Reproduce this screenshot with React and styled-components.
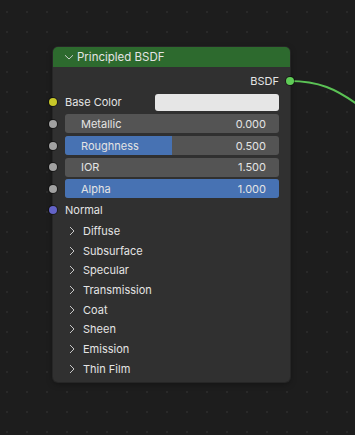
import React from "react";
import styled, { createGlobalStyle } from "styled-components";

const GlobalStyle = createGlobalStyle`
html, body {
margin: 0;
padding: 0;
background: #1d1d1d;
}
body {
font-family: Inter, "DejaVu Sans", sans-serif;
font-size: 11px;
color: #e4e4e4;
}
`;

const panels = ["Diffuse", "Subsurface", "Specular", "Transmission", "Coat", "Sheen", "Emission", "Thin Film"];

const fields = [
    { label: "Metallic", value: "0.000", fill: 0 },
    { label: "Roughness", value: "0.500", fill: 0.5 },
    { label: "IOR", value: "1.500", fill: 0 },
    { label: "Alpha", value: "1.000", fill: 1 },
];

const Chevron = ({ down }) => (
    <svg width="10" height="10" viewBox="0 0 10 10">
        {down
            ? <path d="M1 3.2 L5 7 L9 3.2" fill="none" stroke="#d8d8d8" strokeWidth="0.9" />
            : <path d="M3 1 L7 5 L3 9" fill="none" stroke="#d8d8d8" strokeWidth="0.9" />}
    </svg>
);

const App = () => {
    return (
        <Canvas>
            <GlobalStyle />
            <Link width="355" height="435" viewBox="0 0 355 435">
                <path d="M289 81 C 318 81, 336 88, 362 108" fill="none" stroke="#5bc255" strokeWidth="2" />
            </Link>
            <Node>
                <Header>
                    <Chevron down />
                    <span>Principled BSDF</span>
                </Header>
                <Body>
                    <OutputRow>
                        BSDF
                        <Socket side="right" color="#5fcc57" />
                    </OutputRow>
                    <Row>
                        <Socket color="#c7c729" />
                        <Label>Base Color</Label>
                        <Swatch />
                    </Row>
                    {fields.map((f) => (
                        <Row key={f.label}>
                            <Socket color="#a1a1a1" />
                            <Field>
                                <Fill style={{ width: `${f.fill * 100}%` }} />
                                <FieldText>{f.label}</FieldText>
                                <FieldText>{f.value}</FieldText>
                            </Field>
                        </Row>
                    ))}
                    <Row>
                        <Socket color="#6363c7" />
                        <Label>Normal</Label>
                    </Row>
                    {panels.map((p) => (
                        <PanelRow key={p}>
                            <Chevron />
                            <span>{p}</span>
                        </PanelRow>
                    ))}
                </Body>
            </Node>
        </Canvas>
    );
};

export default App;

const Canvas = styled.div`
position: relative;
width: 355px;
height: 435px;
overflow: hidden;
box-sizing: border-box;
padding: 47px 0 0 53px;
background-color: #1d1d1d;
background-image: radial-gradient(circle, #292929 0.8px, transparent 1.1px);
background-size: 20px 20px;
background-position: -3px 2px;
`;

const Link = styled.svg`
position: absolute;
left: 0;
top: 0;
`;

const Node = styled.div`
position: relative;
width: 237px;
border-radius: 5px;
background: #303030;
box-shadow: 0 0 0 1px #262626, 0 2px 6px rgba(0, 0, 0, 0.35);
`;

const Header = styled.div`
height: 20px;
display: flex;
align-items: center;
gap: 3px;
padding-left: 11px;
background: #2d6a2e;
border-radius: 5px 5px 0 0;
font-size: 11.5px;
`;

const Body = styled.div`
padding: 3px 0 3px 0;
`;

const OutputRow = styled.div`
position: relative;
height: 21.6px;
display: flex;
align-items: center;
justify-content: flex-end;
padding-right: 11px;
`;

const Row = styled.div`
position: relative;
height: 21.6px;
display: flex;
align-items: center;
padding: 0 11px 0 12px;
`;

const Socket = styled.span`
position: absolute;
top: 50%;
${(p) => (p.side === "right" ? "right: -4px;" : "left: -4px;")}
width: 8px;
height: 8px;
margin-top: -4px;
border-radius: 50%;
background: ${(p) => p.color};
box-shadow: 0 0 0 1px rgba(0, 0, 0, 0.45);
`;

const Label = styled.span`
flex: 1;
`;

const Swatch = styled.div`
width: 124px;
height: 17px;
border-radius: 3px;
background: #e6e6e6;
`;

const Field = styled.div`
position: relative;
flex: 1;
height: 19px;
border-radius: 3px;
background: #545454;
overflow: hidden;
display: flex;
align-items: center;
justify-content: space-between;
padding: 0 13px 0 16px;
`;

const Fill = styled.div`
position: absolute;
left: 0;
top: 0;
bottom: 0;
background: #4772b3;
`;

const FieldText = styled.span`
position: relative;
`;

const PanelRow = styled.div`
height: 19.7px;
display: flex;
align-items: center;
gap: 6px;
padding-left: 14px;
`;
